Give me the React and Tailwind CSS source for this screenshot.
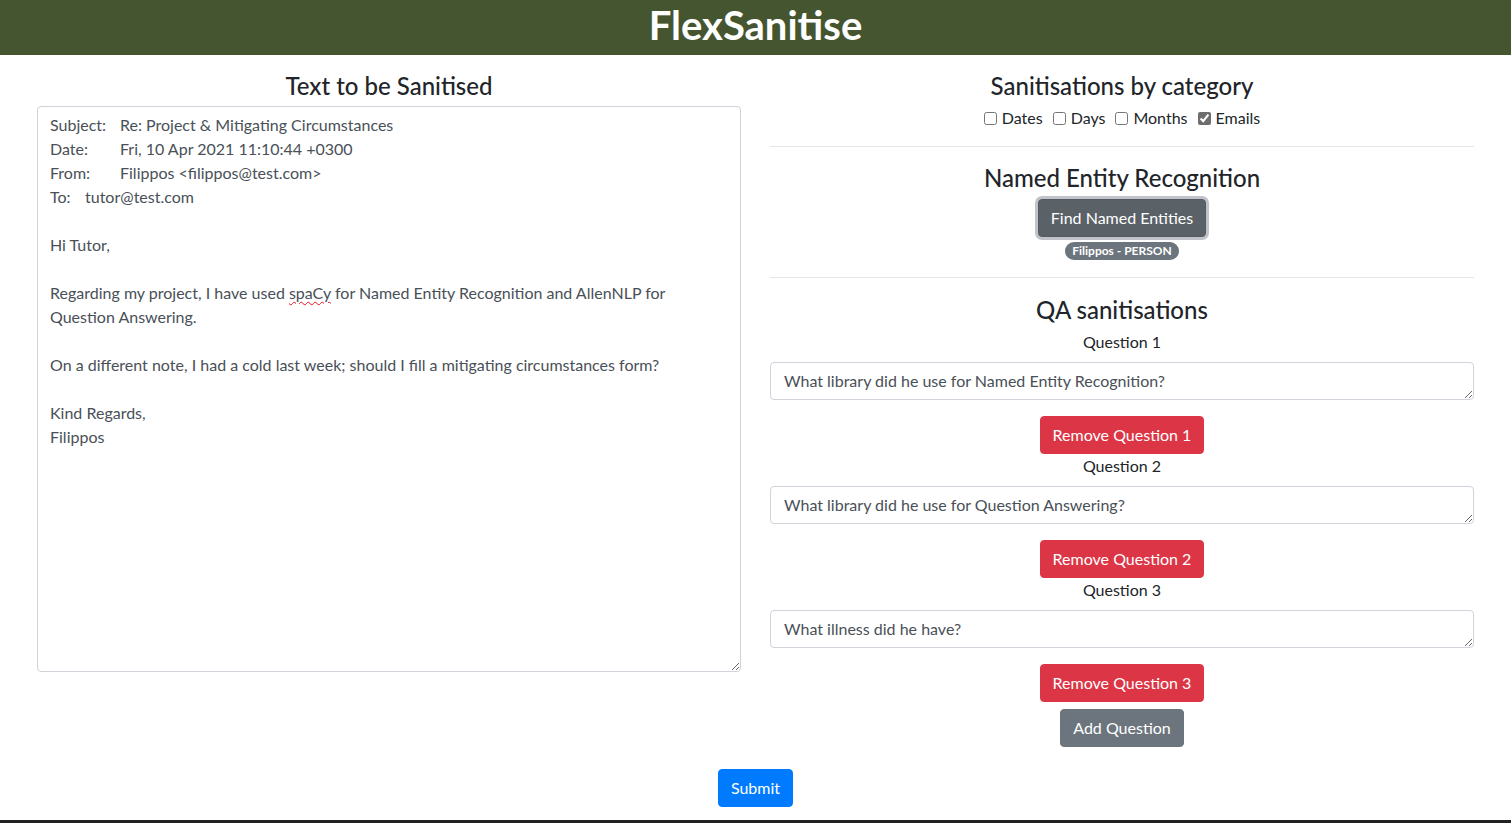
import React, { useState } from 'react'

const emailText = [
    'Subject:\tRe: Project & Mitigating Circumstances',
    'Date:\tFri, 10 Apr 2021 11:10:44 +0300',
    'From:\tFilippos <filippos@test.com>',
    'To:\ttutor@test.com',
]

const initialQuestions = [
    'What library did he use for Named Entity Recognition?',
    'What library did he use for Question Answering?',
    'What illness did he have?',
]

function Header() {
    return (
        <div className="h-[55px] bg-[#45552f] flex items-center justify-center">
            <h1 className="text-white text-[40px] font-bold leading-none -mt-[5px]">FlexSanitise</h1>
        </div>
    )
}

function EmailBox() {
    return (
        <div className="h-[566px] border border-[#ced4da] rounded-[4px] px-[12px] py-[6px] text-[16px] leading-[24px] text-[#495057] whitespace-pre-wrap [tab-size:35px] overflow-auto resize-y">
            {emailText.join('\n')}
            {'\n\nHi Tutor,\n\nRegarding my project, I have used '}
            <span className="underline decoration-wavy decoration-[#e81123] decoration-1 underline-offset-2">spaCy</span>
            {' for Named Entity Recognition and AllenNLP for Question Answering.\n\nOn a different note, I had a cold last week; should I fill a mitigating circumstances form?\n\nKind Regards,\nFilippos'}
        </div>
    )
}

function Category({ label, checked }) {
    const [on, setOn] = useState(checked)
    return (
        <label className="flex items-center mr-[10px]">
            <input type="checkbox" checked={on} onChange={() => setOn(!on)} className="w-[13px] h-[13px] mr-[5px] accent-[#6e6e6e]" />
            <span>{label}</span>
        </label>
    )
}

export default function App() {
    const [questions, setQuestions] = useState(initialQuestions)

    const removeQuestion = (index) => {
        setQuestions(questions.filter((_, i) => i !== index))
    }

    return (
        <div className="min-h-screen bg-white text-[#212529] font-['Lato','Open_Sans',sans-serif]">
            <Header />
            <div className="flex gap-[29px] px-[37px] pt-[16px]">
                <div className="flex-1 flex flex-col">
                    <h4 className="text-[24px] font-medium leading-[29px] text-center mb-[6px]">Text to be Sanitised</h4>
                    <EmailBox />
                </div>
                <div className="flex-1 flex flex-col items-center">
                    <h4 className="text-[24px] font-medium leading-[29px] text-center">Sanitisations by category</h4>
                    <div className="flex items-center justify-center text-[16px] leading-[24px] mt-[6px] ml-[10px]">
                        <Category label="Dates" checked={false} />
                        <Category label="Days" checked={false} />
                        <Category label="Months" checked={false} />
                        <Category label="Emails" checked={true} />
                    </div>
                    <hr className="w-full border-t border-[#e5e5e5] mt-[16px] mb-[16px]" />
                    <h4 className="text-[24px] font-medium leading-[29px] text-center">Named Entity Recognition</h4>
                    <button className="mt-[7px] px-[12px] py-[6px] text-[16px] leading-[24px] text-white bg-[#5a6268] border border-[#545b62] rounded-[4px] shadow-[0_0_0_3px_rgba(130,138,145,0.5)]">
                        Find Named Entities
                    </button>
                    <span className="mt-[5px] px-[7px] py-[3px] text-[12px] font-bold leading-none text-white bg-[#6c757d] rounded-full">
                        Filippos - PERSON
                    </span>
                    <hr className="w-full border-t border-[#e5e5e5] mt-[17px] mb-[17px]" />
                    <h4 className="text-[24px] font-medium leading-[29px] text-center">QA sanitisations</h4>
                    {questions.map((q, index) => (
                        <div key={index} className="w-full flex flex-col items-center">
                            <label className={`text-[16px] leading-[24px] ${index === 0 ? 'mt-[6px]' : ''}`}>Question {index + 1}</label>
                            <textarea
                                rows={1}
                                defaultValue={q}
                                className="w-full mt-[8px] h-[38px] px-[13px] py-[6px] text-[16px] leading-[24px] text-[#495057] border border-[#ced4da] rounded-[4px] resize-y outline-none"
                            />
                            <button
                                onClick={() => removeQuestion(index)}
                                className="mt-[16px] px-[12px] py-[6px] text-[16px] leading-[24px] text-white bg-[#dc3545] border border-[#dc3545] rounded-[4px]"
                            >
                                Remove Question {index + 1}
                            </button>
                        </div>
                    ))}
                    <button
                        onClick={() => setQuestions([...questions, ''])}
                        className="mt-[7px] px-[12px] py-[6px] text-[16px] leading-[24px] text-white bg-[#6c757d] border border-[#6c757d] rounded-[4px]"
                    >
                        Add Question
                    </button>
                </div>
            </div>
            <div className="flex justify-center mt-[22px]">
                <button className="px-[12px] py-[6px] text-[16px] leading-[24px] text-white bg-[#007bff] border border-[#007bff] rounded-[4px]">
                    Submit
                </button>
            </div>
            <div className="mt-[13px] bg-[#212121] h-[40px] px-[55px] pt-[8px] text-[11px] text-[#555]">
                This sanitisation is treated as a service. Data submitted is not stored.
            </div>
        </div>
    )
}
